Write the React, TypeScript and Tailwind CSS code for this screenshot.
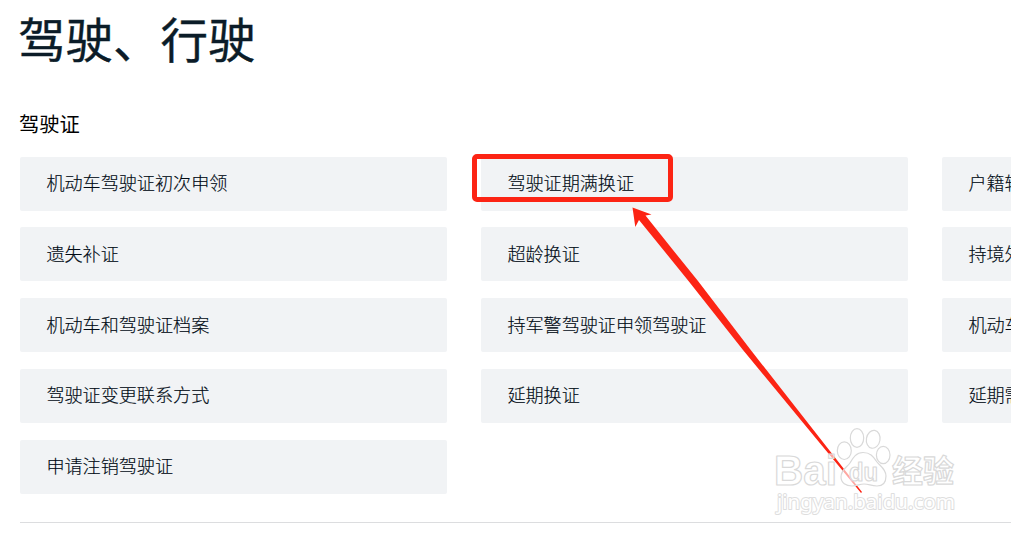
interface Service {
  id: number;
  name: string;
}

const services: Service[] = [
  { id: 1, name: '机动车驾驶证初次申领' },
  { id: 2, name: '驾驶证期满换证' },
  { id: 3, name: '户籍转' },
  { id: 4, name: '遗失补证' },
  { id: 5, name: '超龄换证' },
  { id: 6, name: '持境外' },
  { id: 7, name: '机动车和驾驶证档案' },
  { id: 8, name: '持军警驾驶证申领驾驶证' },
  { id: 9, name: '机动车' },
  { id: 10, name: '驾驶证变更联系方式' },
  { id: 11, name: '延期换证' },
  { id: 12, name: '延期需' },
  { id: 13, name: '申请注销驾驶证' },
];

function Annotation() {
  return (
    <>
      <div className="absolute left-[472px] top-[154px] h-[48px] w-[201px] rounded-[5px] border-[5px] border-[#fc2414]" />
      <svg className="absolute left-0 top-0" width="1011" height="537" viewBox="0 0 1011 537">
        <path
          d="M632.5 207.5 L651.5 214.5 L645.5 215.5 L673 250 L698 281 L750 349 L862 492 L861 493 L743 350 L688.5 281 L663 249.5 L639 220 L635.3 227 Z"
          fill="#fc2414"
        />
      </svg>
    </>
  );
}

function Watermark() {
  return (
    <svg
      className="absolute left-[760px] top-[415px]"
      width="251"
      height="122"
      viewBox="0 0 251 122"
      fill="#ffffff"
      fillOpacity="0.6"
      stroke="#d9d9d9"
      strokeWidth="1.2"
      strokeLinejoin="round"
    >
      <ellipse cx="84.3" cy="35.7" rx="7" ry="8.8" />
      <ellipse cx="97" cy="23" rx="6.7" ry="9.3" />
      <ellipse cx="113.2" cy="24.3" rx="6.8" ry="9" transform="rotate(10 113.2 24.3)" />
      <ellipse cx="123.2" cy="40" rx="6.8" ry="8.7" />
      <path d="M103 37.5 C96 37.5 93 43 90 48 C86 53 81 55 81 62 C81 68 86 71 92 71 C98 71 99 69 104 69 C109 69 111 71 117 71 C123 71 126 67 126 61 C126 54 120 51 117 47 C113 41 110 37.5 103 37.5 Z" />
      <g fontFamily='"Liberation Sans", Arial, sans-serif'>
        <text x="14" y="70" fontSize="42" fontWeight="700" textLength="63" lengthAdjust="spacingAndGlyphs">Bai</text>
        <text x="89" y="65.5" fontSize="25" fontWeight="700" textLength="29" lengthAdjust="spacingAndGlyphs">du</text>
        <text
          x="132"
          y="67"
          fontSize="31"
          fontWeight="700"
          fontFamily='"Noto Sans CJK SC", sans-serif'
          textLength="62"
          lengthAdjust="spacingAndGlyphs"
        >
          经验
        </text>
        <text
          x="17"
          y="94"
          fontSize="20"
          fontFamily='"Noto Sans", sans-serif'
          stroke="#dedede"
          strokeWidth="2"
          fillOpacity="1"
          paintOrder="stroke"
          textLength="178"
          lengthAdjust="spacingAndGlyphs"
        >
          jingyan.baidu.com
        </text>
      </g>
    </svg>
  );
}

export default function App() {
  return (
    <div className="relative h-[537px] w-[1011px] overflow-hidden bg-white px-5 font-['Noto_Sans_CJK_SC',sans-serif] text-[#0b1c28]">
      <h1 className="-ml-[2px] pt-[3px] text-[47.5px] leading-[70px] [-webkit-text-stroke:0.4px]">驾驶、行驶</h1>
      <h2 className="-ml-px mt-[35px] text-[20.3px] leading-[30px] text-black">驾驶证</h2>

      {/* Service list */}
      <div className="mt-[18.6px] grid grid-cols-[427px_427px_427px] gap-x-[34px] gap-y-[16.75px]">
        {services.map((service) => (
          <a
            key={service.id}
            className="flex h-[54px] items-center whitespace-nowrap rounded-xs bg-[#f1f3f5] pb-[3px] pl-[26.4px] text-[18.1px] font-light leading-[26px] text-[#000a14] [-webkit-text-stroke:0.15px]"
          >
            {service.name}
          </a>
        ))}
      </div>

      <div className="-mr-5 mt-[28px] border-t border-[#dcdddf]" />

      <Annotation />
      <Watermark />
    </div>
  );
}
